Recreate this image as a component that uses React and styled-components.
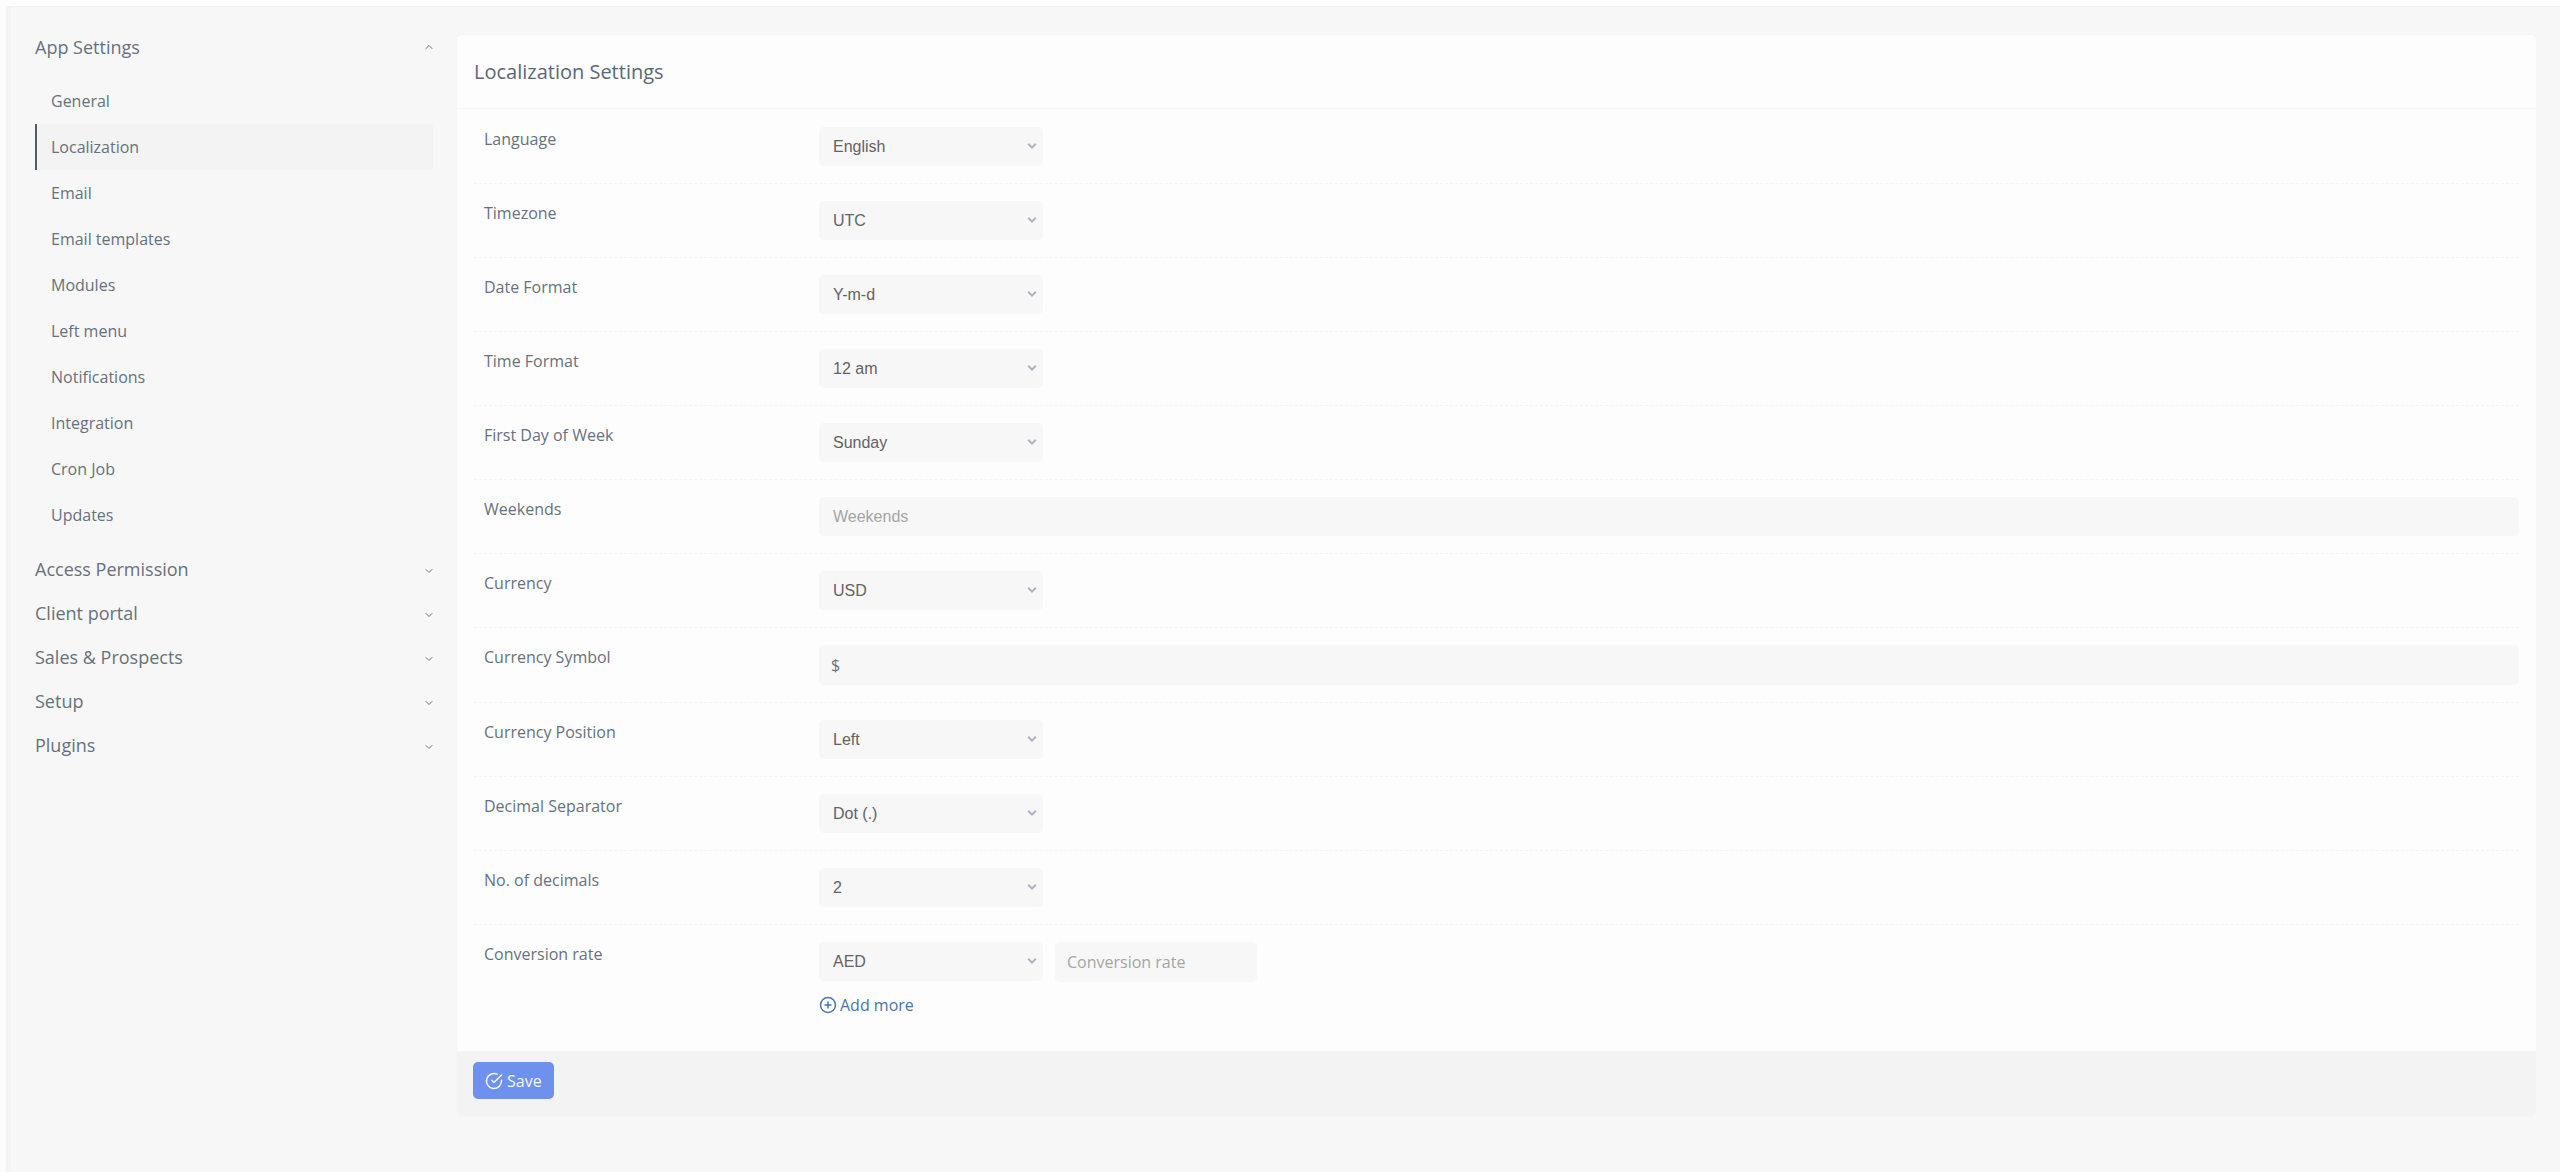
import React, { useState } from "react";
import styled, { createGlobalStyle } from "styled-components";
import { FiCheckCircle, FiChevronDown, FiChevronUp, FiPlusCircle } from "react-icons/fi";

const appSettings = [
  "General",
  "Localization",
  "Email",
  "Email templates",
  "Modules",
  "Left menu",
  "Notifications",
  "Integration",
  "Cron Job",
  "Updates",
];

const groups = ["Access Permission", "Client portal", "Sales & Prospects", "Setup", "Plugins"];

const fields = [
  { id: "language", label: "Language", options: ["English"] },
  { id: "timezone", label: "Timezone", options: ["UTC"] },
  { id: "date_format", label: "Date Format", options: ["Y-m-d"] },
  { id: "time_format", label: "Time Format", options: ["12 am"] },
  { id: "first_day_of_week", label: "First Day of Week", options: ["Sunday"] },
  { id: "weekends", label: "Weekends", placeholder: "Weekends", tags: true },
  { id: "currency", label: "Currency", options: ["USD"] },
  { id: "currency_symbol", label: "Currency Symbol", value: "$" },
  { id: "currency_position", label: "Currency Position", options: ["Left"] },
  { id: "decimal_separator", label: "Decimal Separator", options: ["Dot (.)"] },
  { id: "no_of_decimals", label: "No. of decimals", options: ["2"] },
];

function SelectBox({ id, options, label }) {
  return (
    <SelectWrap>
      <Select id={id} aria-label={label}>
        {options.map(option => (
          <option key={option}>{option}</option>
        ))}
      </Select>
      <Arrow viewBox="0 0 10 8" aria-hidden="true">
        <path d="M1.2 1.8 L5 5.6 L8.8 1.8" />
      </Arrow>
    </SelectWrap>
  );
}

function Sidebar() {
  const [active, setActive] = useState("Localization");

  return (
    <Nav>
      <GroupButton type="button" aria-expanded="true">
        App Settings
        <FiChevronUp />
      </GroupButton>
      <SubList>
        {appSettings.map(name => (
          <li key={name}>
            <SubLink
              href={`#${name}`}
              $active={name === active}
              onClick={() => setActive(name)}
            >
              {name}
            </SubLink>
          </li>
        ))}
      </SubList>
      {groups.map(name => (
        <GroupButton key={name} type="button" aria-expanded="false">
          {name}
          <FiChevronDown />
        </GroupButton>
      ))}
    </Nav>
  );
}

function App() {
  return (
    <>
      <GlobalStyle />
      <Page>
        <Sidebar />
        <Card onSubmit={e => e.preventDefault()}>
          <Title>Localization Settings</Title>
          <Body>
            {fields.map(({ id, label, options, placeholder, value, tags }) => (
              <Row key={id}>
                <Label htmlFor={id}>{label}</Label>
                {options ? (
                  <SelectBox id={id} options={options} />
                ) : (
                  <Input
                    as={tags ? TagInput : undefined}
                    id={id}
                    type="text"
                    placeholder={placeholder}
                    defaultValue={value}
                  />
                )}
              </Row>
            ))}
            <Row>
              <Label htmlFor="conversion_rate">Conversion rate</Label>
              <Rates>
                <RateLine>
                  <SelectBox label="Conversion currency" options={["AED"]} />
                  <RateInput id="conversion_rate" type="text" placeholder="Conversion rate" />
                </RateLine>
                <AddLink href="#add">
                  <FiPlusCircle />
                  Add more
                </AddLink>
              </Rates>
            </Row>
          </Body>
          <Footer>
            <SaveButton type="submit">
              <FiCheckCircle />
              Save
            </SaveButton>
          </Footer>
        </Card>
      </Page>
    </>
  );
}

const GlobalStyle = createGlobalStyle`
  * {
    box-sizing: border-box;
  }
  body {
    margin: 0;
    padding: 6px 0 0 6px;
    background: #fdfdfd;
    color: #65727e;
    font-family: "Open Sans", sans-serif;
    font-size: 16px;
    line-height: 24px;
  }
`;

const Page = styled.main`
  display: flex;
  align-items: flex-start;
  gap: 24px;
  min-height: calc(100vh - 6px);
  padding: 28px 24px 56px;
  border-top: 1px solid #f3f3f3;
  border-left: 5px solid #f3f3f3;
  background: #f7f7f7;
`;

const Nav = styled.nav`
  width: 398px;
  flex-shrink: 0;
`;

const GroupButton = styled.button`
  display: flex;
  align-items: center;
  justify-content: space-between;
  width: 100%;
  height: 44px;
  padding: 0;
  border: none;
  background: none;
  color: inherit;
  font: inherit;
  font-size: 18px;
  cursor: pointer;

  svg {
    width: 12px;
    height: 12px;
    margin-right: -2px;
  }

  &[aria-expanded="false"] svg {
    margin-top: 4px;
  }

  &:first-child {
    height: 24px;
  }
`;

const SubList = styled.ul`
  margin: 19px 0 9px;
  padding: 0;
  list-style: none;
`;

const SubLink = styled.a`
  display: block;
  padding: 11px 16px 11px ${props => (props.$active ? "14px" : "16px")};
  border-left: ${props => (props.$active ? "2px solid #4e5e6a" : "none")};
  background: ${props => (props.$active ? "#f3f3f3" : "transparent")};
  color: inherit;
  text-decoration: none;
`;

const Card = styled.form`
  flex: 1;
  min-width: 0;
  border-radius: 5px;
  overflow: hidden;
  background: #fdfdfd;
  box-shadow: 0 0 2px #f0f0f0;
`;

const Title = styled.h1`
  margin: 0;
  padding: 25px 17px 24px;
  border-bottom: 1px solid #f5f5f5;
  color: #5a6874;
  font-size: 20px;
  font-weight: 400;
  line-height: 24px;
`;

const Body = styled.div`
  padding: 1px 17px 0;
`;

const Row = styled.div`
  display: flex;
  align-items: flex-start;
  padding: 17px 0;

  & + & {
    border-top: 1px dashed #f4f4f4;
  }
`;

const Label = styled.label`
  width: 345px;
  flex-shrink: 0;
  padding-left: 10px;
`;

const SelectWrap = styled.div`
  position: relative;
  width: 224px;
`;

const Select = styled.select`
  display: block;
  width: 100%;
  height: 39px;
  padding: 0 14px;
  border: none;
  border-radius: 5px;
  appearance: none;
  background: #f7f7f7;
  color: #636363;
  font-family: "Liberation Sans", sans-serif;
  font-size: 16px;
`;

const Arrow = styled.svg`
  position: absolute;
  top: 15px;
  right: 6px;
  width: 10px;
  height: 8px;
  fill: none;
  stroke: #adb2c2;
  stroke-width: 2;
  pointer-events: none;
`;

const Input = styled.input`
  display: block;
  flex: 1;
  min-width: 0;
  height: 40px;
  padding: 0 12px;
  border: none;
  border-radius: 5px;
  background: #f7f7f7;
  color: #65727e;
  font-family: "Open Sans", sans-serif;
  font-size: 16px;

  &::placeholder {
    color: #a5a5a5;
  }
`;

const TagInput = styled(Input)`
  height: 39px;
  padding: 0 14px;
  font-family: "Liberation Sans", sans-serif;
`;

const Rates = styled.div`
  flex: 1;
`;

const RateLine = styled.div`
  display: flex;
  gap: 12px;
`;

const RateInput = styled(Input)`
  flex: 0 0 202px;
`;

const AddLink = styled.a`
  display: inline-flex;
  align-items: center;
  gap: 3px;
  margin: 11px 0 17px;
  color: #4a75a8;
  text-decoration: none;

  svg {
    width: 18px;
    height: 18px;
  }
`;

const Footer = styled.footer`
  padding: 11px 16px 17px;
  background: #f3f3f3;
`;

const SaveButton = styled.button`
  display: flex;
  align-items: center;
  gap: 4px;
  height: 37px;
  padding: 0 12px;
  border: none;
  border-radius: 5px;
  background: #6e91ee;
  color: #f4f6fd;
  font: inherit;
  cursor: pointer;

  svg {
    width: 18px;
    height: 18px;
  }
`;

export default App;
